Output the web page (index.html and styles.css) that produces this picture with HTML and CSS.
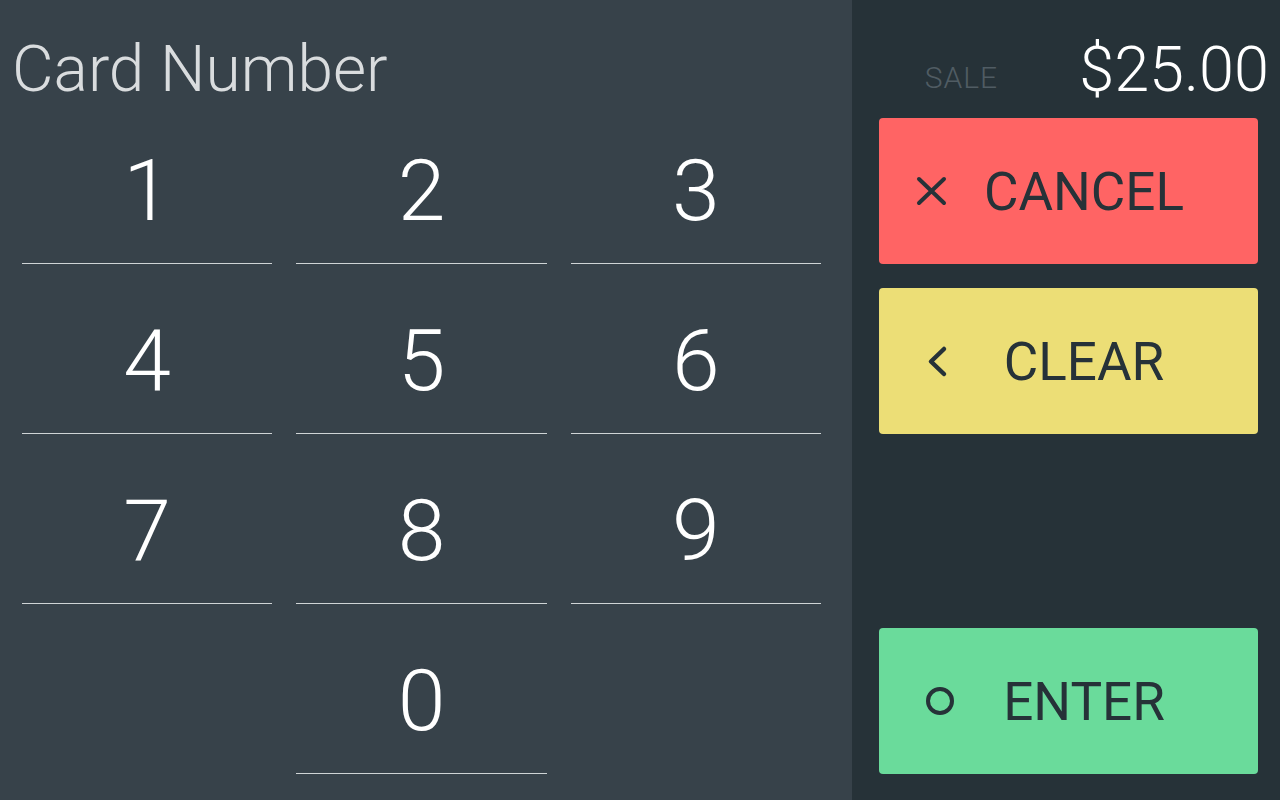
FILE: index.html
```html
<!DOCTYPE html>
<html>
<head>
<meta charset="utf-8">
<link rel="stylesheet" href="styles.css">
</head>
<body>
<div class="screen">
  <section class="entry">
    <h1 class="title">Card Number</h1>
    <div class="keypad">
      <div class="key">1</div>
      <div class="key">2</div>
      <div class="key">3</div>
      <div class="key">4</div>
      <div class="key">5</div>
      <div class="key">6</div>
      <div class="key">7</div>
      <div class="key">8</div>
      <div class="key">9</div>
      <div class="key key-blank"></div>
      <div class="key">0</div>
      <div class="key key-blank"></div>
    </div>
  </section>
  <aside class="side">
    <div class="summary">
      <span class="sale">SALE</span>
      <span class="amount">$25.00</span>
    </div>
    <button class="action action-cancel">
      <svg class="icon" width="80" height="64" viewBox="0 0 80 64"><path d="M40 20 L65 44 M65 20 L40 44" fill="none" stroke="#263238" stroke-width="4" stroke-linecap="round"/></svg>
      <span class="label">CANCEL</span>
    </button>
    <button class="action action-clear">
      <svg class="icon" width="80" height="64" viewBox="0 0 80 64"><path d="M65 20 L52 32.5 L65 45" fill="none" stroke="#263238" stroke-width="4.5" stroke-linecap="round" stroke-linejoin="round"/></svg>
      <span class="label">CLEAR</span>
    </button>
    <div class="spacer"></div>
    <button class="action action-enter">
      <svg class="icon" width="80" height="64" viewBox="0 0 80 64"><circle cx="61" cy="32" r="12" fill="none" stroke="#263238" stroke-width="4"/></svg>
      <span class="label">ENTER</span>
    </button>
  </aside>
</div>
</body>
</html>
```

FILE: styles.css
```css
* { box-sizing: border-box; }
html, body {
  margin: 0;
  padding: 0;
  width: 1280px;
  height: 800px;
  overflow: hidden;
}
body {
  font-family: Roboto, "Noto Sans", sans-serif;
  background: #263238;
}
.screen {
  display: flex;
  width: 1280px;
  height: 800px;
}
.entry {
  width: 852px;
  height: 800px;
  background: #37424a;
}
.title {
  margin: 0;
  height: 94px;
  padding: 38px 0 0 12px;
  font-size: 64px;
  line-height: 64px;
  font-weight: 300;
  color: #d9dcde;
}
.keypad {
  display: grid;
  grid-template-columns: 1fr 1fr 1fr;
  grid-auto-rows: 170px;
  column-gap: 24px;
  padding: 0 31px 0 22px;
}
.key {
  display: flex;
  align-items: flex-end;
  justify-content: center;
  padding-bottom: 29px;
  border-bottom: 1px solid #cfd4d6;
  font-size: 86px;
  line-height: 86px;
  font-weight: 300;
  color: #ffffff;
}
.key-blank { border-bottom-color: transparent; }

.side {
  flex: 1;
  display: flex;
  flex-direction: column;
  padding: 0 22px 26px 27px;
}
.summary {
  height: 118px;
  display: flex;
  justify-content: flex-end;
  align-items: flex-start;
  gap: 81px;
  padding: 38px 11px 0 0;
  margin-right: -22px;
}
.sale {
  margin-top: 25px;
  font-size: 30px;
  line-height: 30px;
  font-weight: 300;
  letter-spacing: 1px;
  color: #505c63;
}
.amount {
  font-size: 63px;
  line-height: 63px;
  font-weight: 300;
  color: #ffffff;
}
.action {
  display: grid;
  align-items: center;
  height: 146px;
  width: 379px;
  padding: 0;
  border: 0;
  border-radius: 4px;
  font-family: inherit;
  color: #263238;
}
.action .icon,
.action .label { grid-area: 1 / 1; }
.action .icon { justify-self: start; }
.action .label {
  padding-left: 31px;
  padding-top: 2px;
  text-align: center;
  font-size: 53px;
  font-weight: 400;
  line-height: 64px;
}
.action-cancel { background: #ff6464; }
.action-clear { background: #ecde76; margin-top: 24px; }
.action-enter { background: #6adb9b; }
.spacer { flex: 1; }
```
